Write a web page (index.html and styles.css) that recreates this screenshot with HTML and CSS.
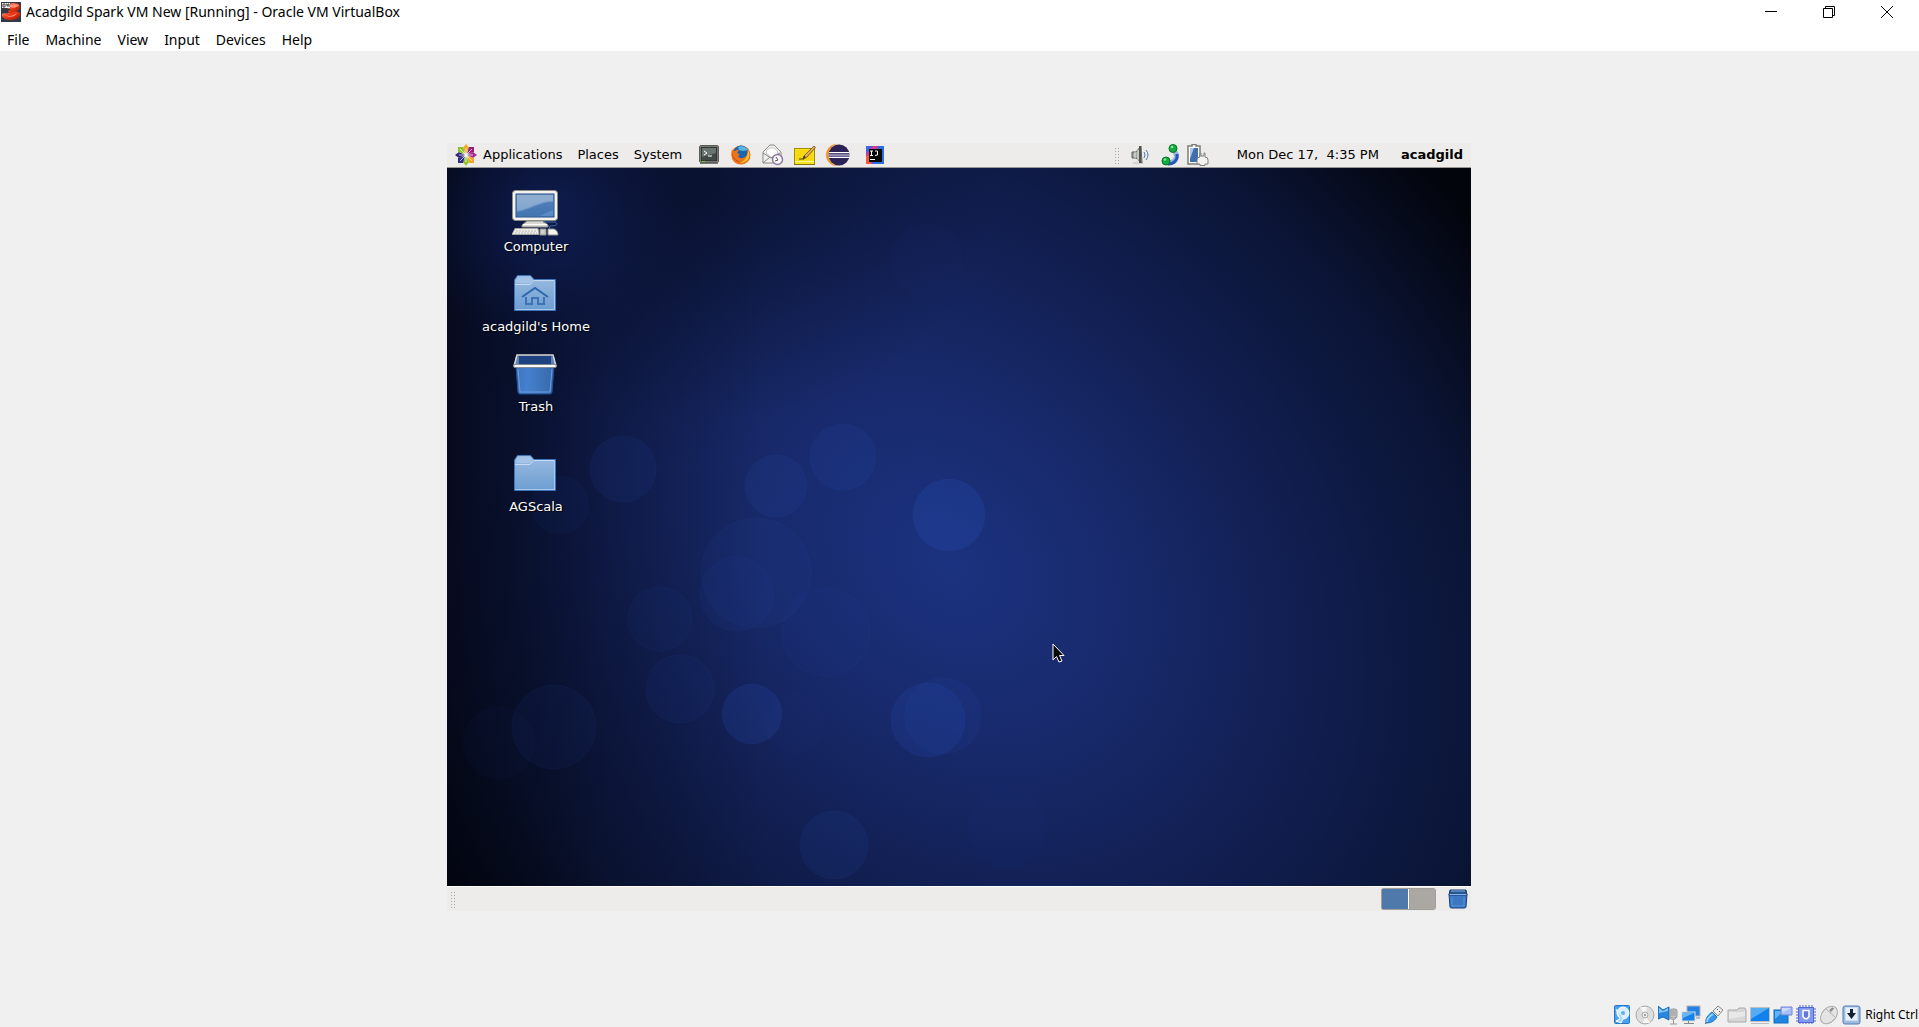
FILE: index.html
```html
<!DOCTYPE html>
<html lang="en">
<head>
<meta charset="utf-8">
<title>Acadgild Spark VM New [Running] - Oracle VM VirtualBox</title>
<link rel="stylesheet" href="styles.css">
</head>
<body>
<div class="window">
  <header class="titlebar">
    <svg class="app-icon" width="20" height="20" viewBox="0 0 20 20" aria-hidden="true">
      <defs><linearGradient id="red" x1="0" y1="0" x2="1" y2="1"><stop offset="0" stop-color="#ffb09a"/><stop offset=".4" stop-color="#f0401c"/><stop offset="1" stop-color="#a80c00"/></linearGradient></defs>
      <rect width="20" height="20" fill="#343a46"/>
      <path d="M1 12c2-2 6 1 8-2 2-2 8-1 10 1 1 4-3 7-9 7-6 0-10-3-9-6z" fill="url(#red)"/>
      <path d="M6 5c1-5 12-5 13-1 0 4-3 5-6 6s-3 2-5 1 0-3 2-4c-2 0-4 0-4-2z" fill="url(#red)"/>
      <path d="M8 4c3-2 8-2 10-1-2 3-7 4-10 1zM4 13c4 2 8 1 12-2-1 4-9 5-12 2z" fill="#ff9474"/>
      <rect x="1" y="1" width="8" height="5" fill="#f4f4f4"/><path d="M2 2h2v3H2zM5 2h1v2h1V2h1v3" fill="none" stroke="#444"/>
    </svg>
    <h1 class="title">Acadgild Spark VM New [Running] - Oracle VM VirtualBox</h1>
    <div class="window-controls">
      <button type="button" aria-label="Minimize"><svg width="12" height="12" viewBox="0 0 12 12"><path d="M0 5.500h12" stroke="#000"/></svg></button>
      <button type="button" aria-label="Restore"><svg width="12" height="12" viewBox="0 0 12 12" fill="none" stroke="#000"><path d="M.5 2.500h9v9h-9zM2.500 2.500v-2h9v9h-2"/></svg></button>
      <button type="button" aria-label="Close"><svg width="12" height="12" viewBox="0 0 12 12"><path d="M0 0l12 12M12 0L0 12" stroke="#000"/></svg></button>
    </div>
  </header>
  <nav class="menubar" aria-label="Virtual machine">
    <button type="button">File</button><button type="button">Machine</button><button type="button">View</button><button type="button">Input</button><button type="button">Devices</button><button type="button">Help</button>
  </nav>

  <main class="viewport">
    <section class="guest" aria-label="Guest screen">
      <div class="panel panel-top">
        <nav class="panel-menus" aria-label="Desktop menus">
          <button type="button" class="apps">
            <svg width="22" height="22" viewBox="0 0 22 22" aria-hidden="true">
              <path d="M11 0l3 4-3 6-3-6z" fill="#f0a820"/><path d="M22 11l-4 3-6-3 6-3z" fill="#a02c8c"/><path d="M11 22l-3-4 3-6 3 6z" fill="#8fc52c"/><path d="M0 11l4-3 6 3-6 3z" fill="#302878"/>
              <path d="M3 3h5l2 7-7-2z" fill="#8cc42a"/><path d="M19 3v5l-7 2 2-7z" fill="#981c7c"/><path d="M19 19h-5l-2-7 7 2z" fill="#f2a624"/><path d="M3 19v-5l7-2-2 7z" fill="#2c2c88"/>
              <path d="M5 5l12 12M17 5L5 17M11 4v14M4 11h14" stroke="#fff" stroke-width=".7"/>
            </svg>Applications</button>
          <button type="button">Places</button>
          <button type="button">System</button>
        </nav>
        <div class="launchers">
          <button type="button" aria-label="Terminal"><svg width="20" height="20" viewBox="0 0 20 20"><rect x=".5" y=".5" width="19" height="17" rx="1.500" fill="#c5c7c3" stroke="#5a5c58"/><rect x="2" y="2" width="16" height="14" fill="#424846" stroke="#252927"/><path d="M3 3h14v5L3 12z" fill="#697471"/><path d="M5 6l3 2-3 2M9 11h4" stroke="#fff" fill="none"/><path d="M1 18.500h18" stroke="#787a76"/><path d="M3 16.500h3" stroke="#72d025"/></svg></button>
          <button type="button" aria-label="Firefox"><svg width="20" height="20" viewBox="0 0 20 20"><circle cx="10" cy="10" r="9.500" fill="#e66412"/><circle cx="10" cy="8" r="7.500" fill="#1b65ae"/><path d="M7 2c4-2 8 0 10 3l-5 1-4-1z" fill="#54b8e4"/><path d="M1 4c1 2 1 2 3 2 2-2 4-1 4-1l-2 3c3 1 3 2 1 3 2 4 7 2 9-1 1-3 0-5-1-6 7 6 3 14-4 15C3 20-1 13 1 4z" fill="#ed7417"/><path d="M17 5c4 8-2 13-8 13 4-2 8-5 8-13z" fill="#ffc72d"/><path d="M1 6c0 7 4 10 9 11-6 0-10-5-9-11z" fill="#bd330c"/></svg></button>
          <button type="button" aria-label="Mail and calendar"><svg width="22" height="22" viewBox="0 0 22 22"><path d="M1 8l7-7h4l7 7v11H1z" fill="#f1f1ef" stroke="#888a85"/><path d="M4 9c1-7 10-7 12 0l-6 5z" fill="#fff" stroke="#c4c4c1"/><path d="M1 9l8 5 9-5M1 19l7-6" fill="none" stroke="#888a85"/><circle cx="15.500" cy="15.500" r="5" fill="#f8f7f9" stroke="#8d79a0" stroke-width="1.500"/><path d="M14 13l2 3-3 1" fill="none" stroke="#555"/></svg></button>
          <button type="button" aria-label="Notes"><svg width="22" height="21" viewBox="0 0 22 21"><rect x=".5" y="3.500" width="20" height="16" fill="#f5e51a" stroke="#a58a00"/><path d="M2 5h17v10L2 16z" fill="#f6d710"/><path d="M1 16.500h19" stroke="#fff6a0"/><path d="M0 19.500h21" stroke="#85720d"/><path d="M9 14l1-3 10-10 1.500 1.500-9 10z" fill="#e7ae5c" stroke="#654a20" stroke-width=".8"/><path d="M9 14l1-3 2 1z" fill="#222"/><path d="M5 14h5" stroke="#504000"/></svg></button>
          <button type="button" aria-label="Eclipse"><svg width="24" height="22" viewBox="0 0 24 22"><circle cx="11" cy="11" r="11" fill="#f7941e"/><circle cx="13.500" cy="11" r="11" fill="#ebebea"/><circle cx="13" cy="11" r="10.500" fill="#2c2255"/><path d="M3 8.500h20M2.500 11h21M3 13.500h20" stroke="#fff"/><path d="M3 10h20M3 12.300h20" stroke="#7e76ac"/></svg></button>
          <button type="button" class="idea" aria-label="IntelliJ IDEA"><svg width="18" height="18" viewBox="0 0 18 18"><path d="M0 0h18v18H0z" fill="#2a6fe0"/><path d="M0 0h12L6 18H0z" fill="#d83a8c"/><path d="M0 10h5v8H0z" fill="#f25c3c"/><path d="M0 0h7L0 8z" fill="#4a60e0"/><path d="M3 3h13v13H3z" fill="#080808"/><path d="M4 5h3M5.500 5v5M4 9.500h3M9 5h2.500v4L9 9.500M4 13.500h5" fill="none" stroke="#fff"/></svg></button>
        </div>
        <div class="tray">
          <span class="grip"></span>
          <svg class="speaker" width="20" height="20" viewBox="0 0 20 20" role="img" aria-label="Volume"><ellipse cx="7" cy="18" rx="6" ry="1.500" fill="#d5d5d3"/><path d="M1 7h4l5-6 1 17-6-5H1z" fill="#a3a6a0" stroke="#5b5e5a"/><path d="M4 7v6M7 5v10" stroke="#e8e9e7"/><path d="M9 1v17" stroke="#50534f" stroke-width="2"/><path d="M13 7q2 3 0 6M15 5q4 5 0 10" fill="none" stroke="#4a7ab4"/></svg>
          <svg class="network" width="19" height="22" viewBox="0 0 19 22" role="img" aria-label="Network"><path d="M14 8c4 7-1 11-8 11" fill="none" stroke="#9cb5e3" stroke-width="5"/><path d="M16 10c1 6-3 10-9 10" fill="none" stroke="#2456ba" stroke-width="3"/><circle cx="12" cy="4.500" r="4" fill="#12ab42" stroke="#087028"/><circle cx="5" cy="17" r="4" fill="#12ab42" stroke="#087028"/><circle cx="11" cy="3" r="1.300" fill="#85ed90"/><circle cx="4" cy="15.500" r="1.300" fill="#85ed90"/></svg>
          <svg class="battery" width="22" height="22" viewBox="0 0 22 22" role="img" aria-label="Power"><path d="M1 2h4V.5h4V2h4v18H1z" fill="#fff" stroke="#7a7d79" stroke-width="1.500"/><path d="M3 4h8v14H3z" fill="#3e6eae"/><path d="M3 4h4L3 15z" fill="#a8c5e7"/><path d="M10 20v-4q0-3 3-3V9h1v3h3V9h1v4q3 0 3 3v4h-3v1.500h-5V20z" fill="#f2f2f0" stroke="#7e807c"/></svg>
          <time class="clock">Mon Dec 17, &nbsp;4:35 PM</time>
          <button type="button" class="user">acadgild</button>
        </div>
      </div>

      <div class="desktop">
        <svg class="wallpaper" viewBox="0 0 1024 718" preserveAspectRatio="none" aria-hidden="true">
          <defs>
            <radialGradient id="glow" gradientUnits="userSpaceOnUse" cx="0" cy="0" r="1" gradientTransform="translate(500 395) rotate(45) scale(800 620)">
              <stop offset="0" stop-color="#1b3280"/><stop offset=".25" stop-color="#182a6c"/><stop offset=".5" stop-color="#111e50"/><stop offset=".75" stop-color="#0b1537"/><stop offset="1" stop-color="#03050d"/>
            </radialGradient>
            <radialGradient id="spot"><stop offset="0" stop-color="#122261" stop-opacity=".7"/><stop offset="1" stop-color="#101e55" stop-opacity="0"/></radialGradient>
            <radialGradient id="shade"><stop offset="0" stop-color="#040a1c" stop-opacity=".5"/><stop offset="1" stop-color="#040a1c" stop-opacity="0"/></radialGradient>
            <linearGradient id="edge"><stop offset="0" stop-color="#01030c" stop-opacity=".6"/><stop offset=".5" stop-color="#01030c" stop-opacity=".2"/><stop offset="1" stop-color="#01030c" stop-opacity="0"/></linearGradient>
          </defs>
          <rect width="1024" height="718" fill="url(#glow)"/>
          <rect width="320" height="718" fill="url(#edge)"/>
          <ellipse cx="250" cy="20" rx="300" ry="240" fill="url(#shade)"/>
          <circle cx="100" cy="50" r="135" fill="url(#spot)"/>
          <g fill="#2850b8" fill-opacity=".12" stroke="#3c68cc" stroke-opacity=".07">
            <circle cx="396" cy="289" r="33"/><circle cx="502" cy="347" r="36" fill-opacity=".25"/><circle cx="176" cy="301" r="33" fill-opacity=".1"/><circle cx="329" cy="318" r="31"/>
            <circle cx="309" cy="405" r="55" fill-opacity=".07"/><circle cx="290" cy="426" r="37" fill-opacity=".08"/>
            <circle cx="379" cy="464" r="44" fill-opacity=".05"/><circle cx="213" cy="451" r="32" fill-opacity=".06"/><circle cx="233" cy="521" r="34" fill-opacity=".08"/>
            <circle cx="305" cy="546" r="30" fill-opacity=".2"/><circle cx="348" cy="555" r="30" fill-opacity=".04" stroke-opacity=".03"/><circle cx="481" cy="552" r="37" fill-opacity=".18"/><circle cx="496" cy="548" r="38" fill-opacity=".1"/>
            <circle cx="107" cy="559" r="42" fill-opacity=".08"/><circle cx="52" cy="575" r="36" fill-opacity=".04" stroke-opacity=".03"/><circle cx="387" cy="677" r="34" fill-opacity=".12"/>
            <circle cx="113" cy="337" r="29" fill-opacity=".06" stroke-opacity=".03"/><circle cx="560" cy="660" r="40" fill-opacity=".03" stroke-opacity=".02"/><circle cx="480" cy="92" r="36" fill-opacity=".04" stroke-opacity=".02"/>
          </g>
        </svg>

        <ul class="icons">
          <li><a href="#computer"><svg width="48" height="48" viewBox="1 -1 48 48" aria-hidden="true"><defs><linearGradient id="scr" x1="0" y1="0" x2="0" y2="1"><stop offset="0" stop-color="#7e9fc9"/><stop offset="1" stop-color="#5689c4"/></linearGradient></defs><rect x="1.500" y="1.500" width="45" height="30" rx="3" fill="#f3f3ef" stroke="#8b8b82"/><rect x="5" y="5" width="38" height="23" fill="url(#scr)" stroke="#204a87"/><path d="M6 22c13-2 21-10 36-10V6H6z" fill="#b5c7db" opacity=".4"/><path d="M6 23c14-2 22-10 36-10v8L28 27H6z" fill="#275e9f" opacity=".45"/><path d="M16 32h16l5 4v2H11v-2z" fill="#d8d9d2" stroke="#8b8c86"/><path d="M12 35.500h24" stroke="#fff"/><path d="M32 33h12c4 2 2 4-5 4l-1 3" fill="none" stroke="#3e6da7"/><path d="M4 39.500h23l1 6H1z" fill="#eeeeeb" stroke="#a3a49e"/><path d="M5 42h21M4 44h22" stroke="#b7b8b1" stroke-dasharray="2 1"/><path d="M29 40h6v6h-6z" fill="#cfd0ca" stroke="#90918b"/><path d="M37 40h6c3 1 4 4 4 6H37z" fill="#f4f4f1" stroke="#92938b"/></svg><span>Computer</span></a></li>
          <li><a href="#home"><svg width="48" height="48" viewBox="1 -1 48 48" aria-hidden="true"><defs><linearGradient id="fold" x1="0" y1="0" x2="0" y2="1"><stop offset="0" stop-color="#9bbce1"/><stop offset="1" stop-color="#6c9dd1"/></linearGradient></defs><path d="M3.500 41.500V11l3-4.500h13L23 10.500h21.500v31z" fill="url(#fold)" stroke="#3d73b7"/><path d="M5 14V11l2-3h12l3 3-3 3z" fill="#a3c3e9"/><path d="M4 15.500h15l4-4h20" fill="none" stroke="#c7dcf4"/><path d="M4.500 40.500h39V12" fill="none" stroke="#a9c9ec"/><path d="M11 28l13-9 13 9" fill="none" stroke="#2f66ac" stroke-width="2"/><path d="M15 28v7h6v-6h6v6h6v-7" fill="none" stroke="#3d73b5" stroke-width="2"/></svg><span>acadgild's Home</span></a></li>
          <li><a href="#trash"><svg width="48" height="48" viewBox="1 -5 48 48" aria-hidden="true"><defs><linearGradient id="bin"><stop offset="0" stop-color="#3d74bf"/><stop offset=".3" stop-color="#4580ce"/><stop offset="1" stop-color="#3768a9"/></linearGradient></defs><path d="M5 14h38l-2 25q0 2-2 2H9q-2 0-2-2z" fill="url(#bin)" stroke="#234f92"/><path d="M7 16l2 23h30l2-23" fill="none" stroke="#6e9ddd"/><path d="M6 2h36l3 11H3z" fill="#1e4380"/><path d="M8 3v9l-4 1V5zM40 3v9l4 1V5z" fill="#5c84b8"/><path d="M6 2h36l3 11H3z" fill="none" stroke="#d9d9d4" stroke-width="1.500"/><path d="M3 11.500h42v3H3z" fill="#fafaf8" stroke="#777b78" stroke-width=".7"/></svg><span>Trash</span></a></li>
          <li class="apart"><a href="#agscala"><svg width="48" height="48" viewBox="1 -1 48 48" aria-hidden="true"><path d="M3.500 41.500V11l3-4.500h13L23 10.500h21.500v31z" fill="url(#fold)" stroke="#3d73b7"/><path d="M5 14V11l2-3h12l3 3-3 3z" fill="#a3c3e9"/><path d="M4 15.500h15l4-4h20" fill="none" stroke="#c7dcf4"/><path d="M4.500 40.500h39V12" fill="none" stroke="#a9c9ec"/></svg><span>AGScala</span></a></li>
        </ul>
        <svg class="pointer" width="14" height="20" viewBox="0 0 14 20" aria-hidden="true"><path d="M1 1v16l3.500-3.500L7 19l3-1-2.500-5.500H12z" fill="#080808" stroke="#fff"/></svg>
      </div>

      <div class="panel panel-bottom">
        <span class="grip"></span>
        <div class="workspaces"><button type="button" class="current" aria-label="Workspace 1"></button><button type="button" aria-label="Workspace 2"></button></div>
        <button type="button" class="panel-trash" aria-label="Trash"><svg width="20" height="20" viewBox="0 0 20 20"><path d="M1 5h18l-1 13q0 1-2 1H4q-2 0-2-1z" fill="#3b77c2" stroke="#183f7c"/><path d="M2 1h16l1 5H1z" fill="#27558f" stroke="#173b72"/><path d="M3 2h14M1.500 5.500h17" stroke="#86b5e7"/><path d="M4 8v9h12V8" fill="none" stroke="#5c94d6"/></svg></button>
      </div>
    </section>
  </main>

  <footer class="statusbar">
    <svg width="20" height="20" viewBox="-1 0 20 20" role="img" aria-label="Hard disk"><rect x="1.500" y=".5" width="15" height="18" rx="1" fill="#4ba1ed" stroke="#2377c6"/><circle cx="10" cy="8" r="6" fill="#d9eefe" stroke="#fff"/><circle cx="10" cy="8" r="2" fill="#65aee9"/><path d="M3 4l4 10-4 2 5 2 2-4" fill="#a6d5fa" stroke="#fff"/></svg>
    <svg width="20" height="20" viewBox="0 0 20 20" role="img" aria-label="Optical drive"><circle cx="10" cy="10" r="9" fill="#dedede" stroke="#a8a8a8"/><path d="M10 10L5 2h7zM10 10l5 8H8z" fill="#f7f7f7"/><circle cx="10" cy="10" r="3" fill="#ededed" stroke="#aaa"/><circle cx="10" cy="10" r="1" fill="#888"/></svg>
    <svg width="20" height="20" viewBox="0 0 20 20" role="img" aria-label="Audio"><path d="M0 1l5 4 6-3v13l-6-3-5 2z" fill="#2887df" stroke="#1869b8"/><path d="M1 3l4 3 5-3v3L1 8z" fill="#82c5fa"/><rect x="12" y="4" width="7" height="9" rx="2" fill="#c7c7c7" stroke="#999"/><path d="M13 6h5M13 8h5M13 10h5M11 12q4 5 8 0M15.500 15v4M12 19h7" fill="none" stroke="#999"/></svg>
    <svg width="20" height="20" viewBox="0 0 20 20" role="img" aria-label="Network adapters"><rect x="6" y="1" width="13" height="10" fill="#2582e4" stroke="#b2b2b2"/><path d="M15 13h4" stroke="#888" fill="none"/><rect x="1" y="7" width="13" height="9" fill="#1681e9" stroke="#ddd"/><path d="M2 8h11L2 13z" fill="#67b4f6"/><path d="M3 18.500h10M7.500 16v2" stroke="#888"/></svg>
    <svg width="20" height="20" viewBox="0 0 20 20" role="img" aria-label="USB"><path d="M2 18c-1-4 2-8 6-11l5 5c-3 5-7 6-11 6z" fill="#3497ed" stroke="#1976c8"/><path d="M3 17c0-4 3-6 6-8" stroke="#9bd2fa" stroke-width="2" fill="none"/><path d="M9 6l5-5 5 4-5 6z" fill="#eee" stroke="#888"/><path d="M13 4l1 1M15 6l1 1" stroke="#555"/><path d="M1 19l2-2" stroke="#666"/></svg>
    <svg width="20" height="20" viewBox="0 0 20 20" role="img" aria-label="Shared folders"><path d="M1 17V5h9l2-2h6l1 2v12z" fill="#d7d7d7" stroke="#aaa"/><path d="M2 7h16v4L2 14z" fill="#e8e8e8"/></svg>
    <svg width="20" height="20" viewBox="0 0 20 20" role="img" aria-label="Display"><rect x=".5" y="2.500" width="19" height="14" fill="#1381ed" stroke="#c0c0c0"/><path d="M1 3h18L1 14z" fill="#54acf5"/><path d="M1 18.500h18" stroke="#bdbdbd"/></svg>
    <svg width="20" height="20" viewBox="0 0 20 20" role="img" aria-label="Recording"><rect x="1" y="5" width="14" height="13" fill="#1d85e2" stroke="#176abd"/><path d="M2 6h9l-9 8z" fill="#5fb4f8"/><path d="M8 2h11v8H8z" fill="#a9bffb" stroke="#7185cd"/><path d="M9 3h9l-9 5z" fill="#ced9ff"/></svg>
    <svg width="20" height="20" viewBox="0 0 20 20" role="img" aria-label="Processor"><path d="M4 0v19M7 0v19M10 0v19M13 0v19M16 0v19M0 4h20M0 7h20M0 10h20M0 13h20M0 16h20" stroke="#5965cc"/><rect x="2.500" y="2.500" width="15" height="15" fill="#8199f0" stroke="#5267d4"/><path d="M7 5.500h6v6q-3 5-6 0z" fill="#6479dc" stroke="#fff" stroke-width="1.500"/></svg>
    <svg width="20" height="20" viewBox="0 0 20 20" role="img" aria-label="Mouse integration"><ellipse cx="10" cy="10" rx="7" ry="10" transform="rotate(42 10 10)" fill="#e4e4e4" stroke="#aaa"/><path d="M7 4l9 8M11 8l4-5" stroke="#b2b2b2" fill="none"/><path d="M11 6l3-3" stroke="#888" stroke-width="2"/></svg>
    <svg width="20" height="20" viewBox="0 0 20 20" role="img" aria-label="Keyboard capture"><rect x="1" y="1" width="17" height="18" rx="2" fill="#9ebce0" stroke="#557fb2"/><rect x="3.500" y="2.500" width="12" height="13" fill="#e6eff8" stroke="#c9dcf0"/><path d="M8 4h3v4h3l-4.500 6L5 8h3z" fill="#16202c"/></svg>
    <span class="host-key">Right Ctrl</span>
  </footer>
</div>
</body>
</html>
```
FILE: styles.css
```css
* { box-sizing: border-box; }
body {
  margin: 0;
  background: #f0f0f0;
  color: #000;
  font: 14px/20px "Noto Sans", "Open Sans", sans-serif;
}
button {
  display: flex;
  align-items: center;
  margin: 0;
  padding: 0;
  border: 0;
  background: none;
  color: inherit;
  font: inherit;
}
svg { display: block; flex: none; }

.window { display: flex; flex-direction: column; min-height: 100vh; }
.titlebar { display: flex; align-items: center; gap: 5px; height: 24px; padding: 0 3px 0 1px; background: #fff; }
.title { margin: 0; font-size: 14px; font-weight: 400; white-space: nowrap; }
.window-controls { display: flex; margin-left: auto; }
.window-controls button { justify-content: center; width: 58px; height: 22px; }
.menubar { display: flex; align-items: center; gap: 16px; height: 27px; padding: 4px 7px 0; background: #fff; }

.viewport { display: flex; flex: 1; align-items: center; justify-content: center; padding-right: 1px; }
.guest {
  display: flex;
  flex-direction: column;
  width: 100%;
  max-width: 1024px;
  aspect-ratio: 4 / 3;
  font: 13px/18px "DejaVu Sans", sans-serif;
}
.panel { display: flex; align-items: center; height: 25px; background: #edeceb; }
.panel-top { border-bottom: 1px solid #9a9894; }
.panel-menus { display: flex; gap: 15px; padding-left: 8px; }
.apps { gap: 6px; }
.launchers { display: flex; align-items: center; gap: 10px; margin-left: 16px; }
.launchers button { justify-content: center; min-width: 22px; }
.idea { margin-left: 4px; }
.tray { display: flex; align-items: center; margin-left: auto; padding-right: 8px; white-space: nowrap; }
.grip {
  width: 5px;
  height: 17px;
  background: radial-gradient(circle, #a8a8a4 1px, transparent 1px) 0 0 / 3px 3px;
}
.speaker { margin-left: 12px; }
.network { margin-left: 10px; }
.battery { margin-left: 7px; }
.clock { margin-left: 28px; }
.user { margin-left: 22px; font-weight: 700; }

.desktop { position: relative; flex: 1; overflow: hidden; background: #050a1c; }
.wallpaper { position: absolute; inset: 0; width: 100%; height: 100%; }
.icons {
  position: relative;
  display: flex;
  flex-direction: column;
  gap: 12px;
  width: 178px;
  margin: 0;
  padding: 20px 0 0;
  list-style: none;
}
.icons a {
  display: flex;
  flex-direction: column;
  align-items: center;
  gap: 2px;
  color: #fff;
  text-decoration: none;
  text-shadow: 1px 1px 1px #000;
}
.apart { margin-top: 20px; }
.pointer { position: absolute; left: 605px; top: 475px; }

.panel-bottom { padding: 0 3px; border-top: 1px solid #fff; }
.workspaces {
  display: flex;
  gap: 1px;
  width: 55px;
  height: 22px;
  margin-left: auto;
  padding: 1px;
  border-radius: 3px;
  background: #a19f9a;
}
.workspaces button { flex: 1; background: #aba7a3; }
.workspaces .current { background: #4f78ab; border-right: 1px solid #fff; }
.panel-trash { margin-left: 12px; }

.statusbar { display: flex; align-items: center; justify-content: flex-end; gap: 3px; height: 24px; padding-right: 1px; font-size: 12px; }
.host-key { white-space: nowrap; }
```
